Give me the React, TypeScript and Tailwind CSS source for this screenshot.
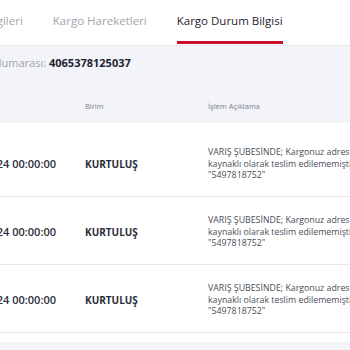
import React from "react";

const rows = [1, 2, 3].map((i) => ({
  id: i,
  date: "19.03.2024 00:00:00",
  unit: "KURTULUŞ",
  lines: ["VARIŞ ŞUBESİNDE; Kargonuz adres", "kaynaklı olarak teslim edilememiştir.", "\"5497818752\""],
}));

export default function App() {
  return (
    <div className="h-[350px] w-[350px] overflow-hidden bg-[#f2f4f9] font-['Open_Sans',sans-serif]">
      <div className="ml-[-41px] w-[480px]">
        {/* tabs */}
        <div className="flex h-[46px] items-stretch gap-[30px] border-b border-[#e6e8ee] bg-white text-[11.5px]">
          <div className="flex items-center pb-[4px] text-[#a2a6ae]">Alıcı Bilgileri</div>
          <div className="flex items-center pb-[4px] text-[#a2a6ae]">Kargo Hareketleri</div>
          <div className="relative flex items-center pb-[4px] text-[#1f2230]">
            Kargo Durum Bilgisi
            <span className="absolute inset-x-0 bottom-[1px] h-[3px] bg-[#c8102e]" />
          </div>
        </div>

        {/* tracking number */}
        <div className="flex h-[34px] items-center whitespace-nowrap">
          <div className="flex w-[90px] justify-end text-[11px] text-[#a0a4ac]">
            <span>Kargo Takip Numarası:&nbsp;</span>
          </div>
          <span className="text-[11px] font-bold text-[#1e2333]">4065378125037</span>
        </div>

        {/* header */}
        <div className="flex h-[43px] items-center pt-[10px] text-[7.5px] text-[#7d818a]">
          <div className="w-[126px]" />
          <div className="w-[123px]">Birim</div>
          <div>İşlem Açıklama</div>
        </div>

        {/* body */}
        <div className="bg-white pb-[9px] pt-[6px]">
          {rows.map((r) => (
            <div key={r.id} className="flex h-[68px] items-center border-b border-[#e9eaee] pt-[4px]">
              <div className="flex w-[126px] justify-end whitespace-nowrap pr-[29px] text-[11px] font-semibold text-[#2a2d38]">
                <span>{r.date}</span>
              </div>
              <div className="w-[123px] text-[10px] font-bold text-[#2a2d38]">{r.unit}</div>
              <div className="text-[8.8px] leading-[11.5px] text-[#4a4e58]">
                {r.lines.map((l) => (
                  <div key={l} className="whitespace-nowrap">{l}</div>
                ))}
              </div>
            </div>
          ))}
        </div>
      </div>
    </div>
  );
}
